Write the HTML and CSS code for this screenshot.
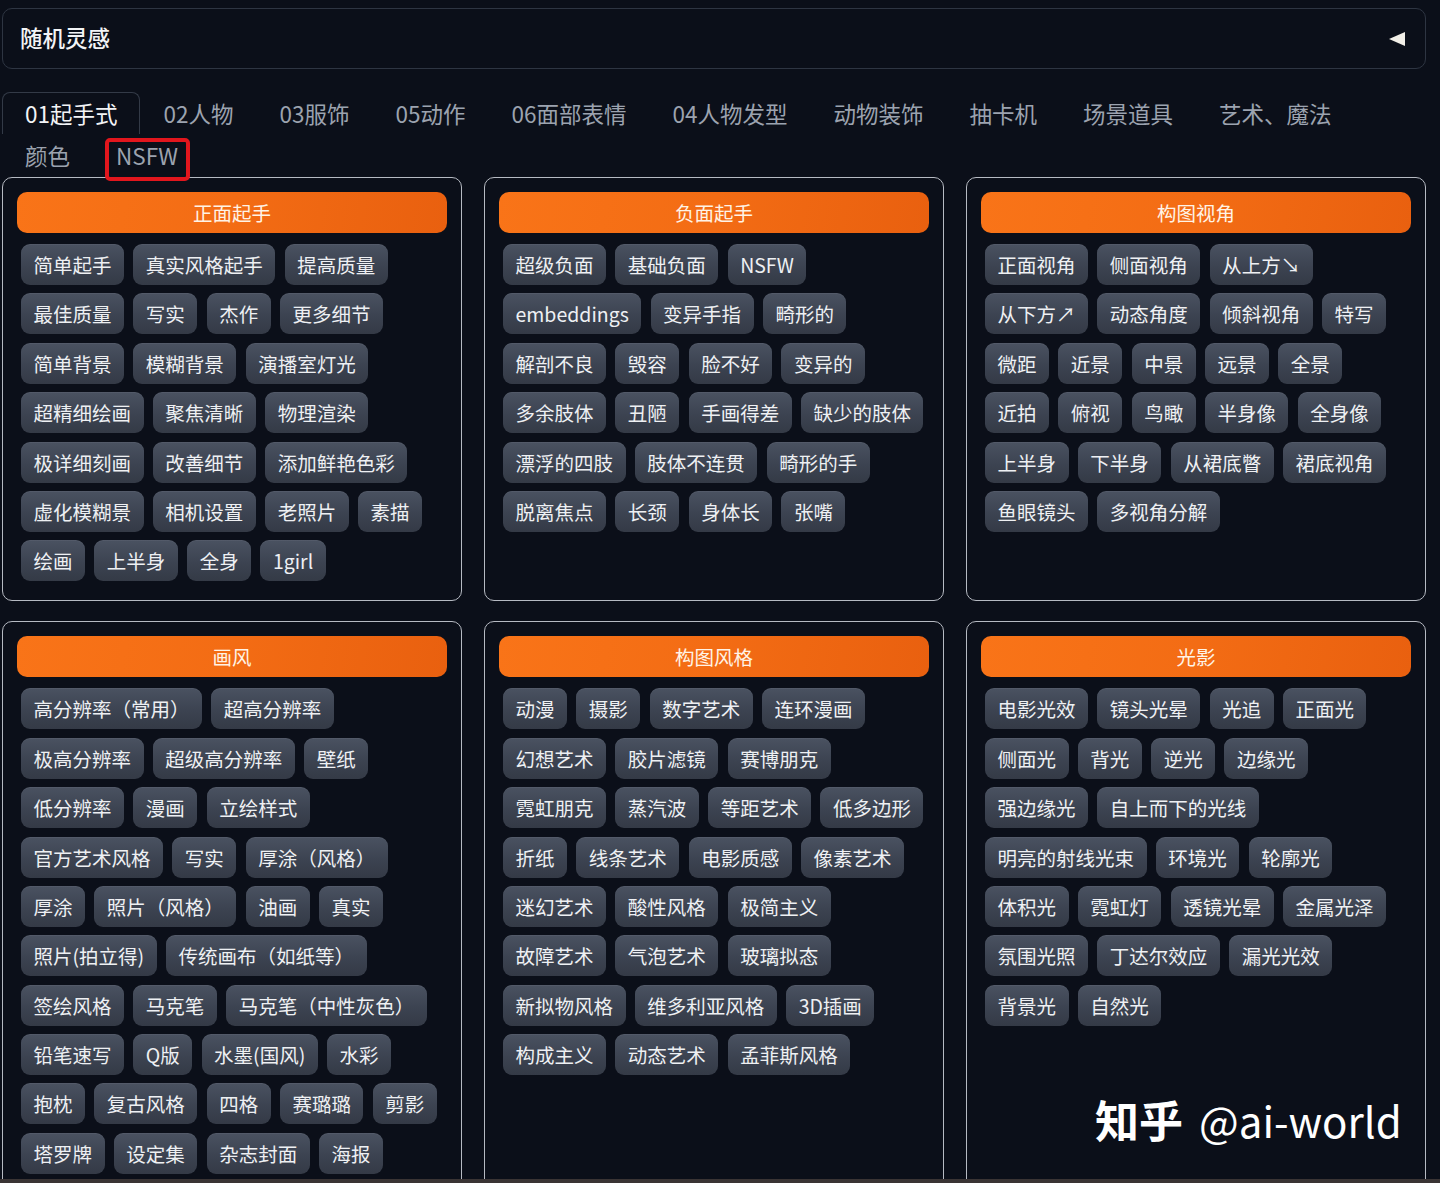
FILE: index.html
```html
<!DOCTYPE html>
<html lang="zh-CN">
<head>
    <meta charset="UTF-8">
    <title>随机灵感</title>
    <link rel="stylesheet" href="styles.css">
</head>
<body>
<div class="page">
    <div class="accordion">
        <span class="acc-title">随机灵感</span>
        <svg class="acc-icon" width="16" height="14" viewBox="0 0 16 14"><polygon points="0,7 16,0 16,14" fill="#f2efe8"/></svg>
    </div>

    <div class="tabs">
        <div class="tab selected">01起手式</div>
        <div class="tab">02人物</div>
        <div class="tab">03服饰</div>
        <div class="tab">05动作</div>
        <div class="tab">06面部表情</div>
        <div class="tab">04人物发型</div>
        <div class="tab">动物装饰</div>
        <div class="tab">抽卡机</div>
        <div class="tab">场景道具</div>
        <div class="tab">艺术、魔法</div>
        <div class="tab">颜色</div>
        <div class="tab marked">NSFW</div>
    </div>

    <div class="grid">
        <section class="group">
            <div class="group-title">正面起手</div>
            <div class="tags">
                <button class="tag">简单起手</button><button class="tag">真实风格起手</button><button class="tag">提高质量</button>
                <button class="tag">最佳质量</button><button class="tag">写实</button><button class="tag">杰作</button><button class="tag">更多细节</button>
                <button class="tag">简单背景</button><button class="tag">模糊背景</button><button class="tag">演播室灯光</button>
                <button class="tag">超精细绘画</button><button class="tag">聚焦清晰</button><button class="tag">物理渲染</button>
                <button class="tag">极详细刻画</button><button class="tag">改善细节</button><button class="tag">添加鲜艳色彩</button>
                <button class="tag">虚化模糊景</button><button class="tag">相机设置</button><button class="tag">老照片</button><button class="tag">素描</button>
                <button class="tag">绘画</button><button class="tag">上半身</button><button class="tag">全身</button><button class="tag">1girl</button>
            </div>
        </section>

        <section class="group">
            <div class="group-title">负面起手</div>
            <div class="tags">
                <button class="tag">超级负面</button><button class="tag">基础负面</button><button class="tag">NSFW</button>
                <button class="tag">embeddings</button><button class="tag">变异手指</button><button class="tag">畸形的</button>
                <button class="tag">解剖不良</button><button class="tag">毁容</button><button class="tag">脸不好</button><button class="tag">变异的</button>
                <button class="tag">多余肢体</button><button class="tag">丑陋</button><button class="tag">手画得差</button><button class="tag">缺少的肢体</button>
                <button class="tag">漂浮的四肢</button><button class="tag">肢体不连贯</button><button class="tag">畸形的手</button>
                <button class="tag">脱离焦点</button><button class="tag">长颈</button><button class="tag">身体长</button><button class="tag">张嘴</button>
            </div>
        </section>

        <section class="group">
            <div class="group-title">构图视角</div>
            <div class="tags">
                <button class="tag">正面视角</button><button class="tag">侧面视角</button><button class="tag">从上方↘</button>
                <button class="tag">从下方↗</button><button class="tag">动态角度</button><button class="tag">倾斜视角</button><button class="tag">特写</button>
                <button class="tag">微距</button><button class="tag">近景</button><button class="tag">中景</button><button class="tag">远景</button><button class="tag">全景</button>
                <button class="tag">近拍</button><button class="tag">俯视</button><button class="tag">鸟瞰</button><button class="tag">半身像</button><button class="tag">全身像</button>
                <button class="tag">上半身</button><button class="tag">下半身</button><button class="tag">从裙底瞥</button><button class="tag">裙底视角</button>
                <button class="tag">鱼眼镜头</button><button class="tag">多视角分解</button>
            </div>
        </section>

        <section class="group">
            <div class="group-title">画风</div>
            <div class="tags">
                <button class="tag">高分辨率（常用）</button><button class="tag">超高分辨率</button>
                <button class="tag">极高分辨率</button><button class="tag">超级高分辨率</button><button class="tag">壁纸</button>
                <button class="tag">低分辨率</button><button class="tag">漫画</button><button class="tag">立绘样式</button>
                <button class="tag">官方艺术风格</button><button class="tag">写实</button><button class="tag">厚涂（风格）</button>
                <button class="tag">厚涂</button><button class="tag">照片（风格）</button><button class="tag">油画</button><button class="tag">真实</button>
                <button class="tag">照片(拍立得)</button><button class="tag">传统画布（如纸等）</button>
                <button class="tag">签绘风格</button><button class="tag">马克笔</button><button class="tag">马克笔（中性灰色）</button>
                <button class="tag">铅笔速写</button><button class="tag">Q版</button><button class="tag">水墨(国风)</button><button class="tag">水彩</button>
                <button class="tag">抱枕</button><button class="tag">复古风格</button><button class="tag">四格</button><button class="tag">赛璐璐</button><button class="tag">剪影</button>
                <button class="tag">塔罗牌</button><button class="tag">设定集</button><button class="tag">杂志封面</button><button class="tag">海报</button>
            </div>
        </section>

        <section class="group">
            <div class="group-title">构图风格</div>
            <div class="tags">
                <button class="tag">动漫</button><button class="tag">摄影</button><button class="tag">数字艺术</button><button class="tag">连环漫画</button>
                <button class="tag">幻想艺术</button><button class="tag">胶片滤镜</button><button class="tag">赛博朋克</button>
                <button class="tag">霓虹朋克</button><button class="tag">蒸汽波</button><button class="tag">等距艺术</button><button class="tag">低多边形</button>
                <button class="tag">折纸</button><button class="tag">线条艺术</button><button class="tag">电影质感</button><button class="tag">像素艺术</button>
                <button class="tag">迷幻艺术</button><button class="tag">酸性风格</button><button class="tag">极简主义</button>
                <button class="tag">故障艺术</button><button class="tag">气泡艺术</button><button class="tag">玻璃拟态</button>
                <button class="tag">新拟物风格</button><button class="tag">维多利亚风格</button><button class="tag">3D插画</button>
                <button class="tag">构成主义</button><button class="tag">动态艺术</button><button class="tag">孟菲斯风格</button>
            </div>
        </section>

        <section class="group">
            <div class="group-title">光影</div>
            <div class="tags">
                <button class="tag">电影光效</button><button class="tag">镜头光晕</button><button class="tag">光追</button><button class="tag">正面光</button>
                <button class="tag">侧面光</button><button class="tag">背光</button><button class="tag">逆光</button><button class="tag">边缘光</button>
                <button class="tag">强边缘光</button><button class="tag">自上而下的光线</button>
                <button class="tag">明亮的射线光束</button><button class="tag">环境光</button><button class="tag">轮廓光</button>
                <button class="tag">体积光</button><button class="tag">霓虹灯</button><button class="tag">透镜光晕</button><button class="tag">金属光泽</button>
                <button class="tag">氛围光照</button><button class="tag">丁达尔效应</button><button class="tag">漏光光效</button>
                <button class="tag">背景光</button><button class="tag">自然光</button>
            </div>
        </section>
    </div>

    <div class="watermark"><span class="wm-cn">知乎</span><span class="wm-id">@ai-world</span></div>
    <div class="edge"></div>
</div>
</body>
</html>
```

FILE: styles.css
```css
html,body {margin:0;padding:0;}
body {background:#0b0f19;color:#e5e7eb;font-family:"Noto Sans CJK SC","Noto Sans",sans-serif;}

.page {position:relative;width:1440px;height:1183px;overflow:hidden;box-sizing:border-box;padding:8px 0 0 2px;}

/* accordion header */
.accordion {width:1424px;height:61px;box-sizing:border-box;border:1px solid #2e3542;border-radius:10px;display:flex;align-items:center;justify-content:space-between;padding:0 20px 4px 17px;}
.acc-title {font-size:22.5px;font-weight:500;color:#f3f4f6;}
.acc-icon {display:block;margin-top:4px;}

/* tabs */
.tabs {display:flex;flex-wrap:wrap;width:1424px;margin-top:23px;}
.tab {position:relative;box-sizing:border-box;height:42px;line-height:40px;padding:0 22px;border:1px solid transparent;border-bottom:none;font-size:22.5px;color:#9ca3af;cursor:pointer;}
.tab.selected {color:#f3f4f6;border-color:#333a47;border-radius:8px 8px 0 0;}
.tab.marked::after {content:"";position:absolute;top:3px;bottom:-5px;left:11px;right:10px;border:4px solid #e2161d;border-radius:5px;z-index:2;}

/* groups */
.grid {display:grid;grid-template-columns:repeat(3,460px);column-gap:22px;row-gap:20px;margin-top:1px;}
.group {border:1px solid #b6bac2;border-radius:10px;padding:14px 14px 19px;}
.group-title {height:41px;line-height:41px;border-radius:10px;text-align:center;font-size:19.5px;color:#fff3e6;background:linear-gradient(100deg,#f97418 0%,#f36c14 50%,#e9600f 100%);}
.tags {display:flex;flex-wrap:wrap;gap:8.4px 9.3px;padding:11px 4px 0;}
.tag {height:41px;line-height:41px;padding:0 12.5px;border:none;border-radius:9px;font-family:inherit;font-size:19.5px;color:#eef0f3;background:linear-gradient(180deg,#4a5261 0%,#3c4351 55%,#343a46 100%);box-shadow:inset 0 1px 0 rgba(255,255,255,0.05);cursor:pointer;white-space:nowrap;}

/* overlays */
.watermark {position:absolute;left:1095px;top:1097px;line-height:1;color:#fff;white-space:nowrap;display:flex;align-items:baseline;}
.wm-cn {font-size:44px;font-weight:700;margin-right:16px;}
.wm-id {font-size:42px;}
.edge {position:absolute;left:0;right:0;bottom:0;height:4px;background:#3a3434;}
```
